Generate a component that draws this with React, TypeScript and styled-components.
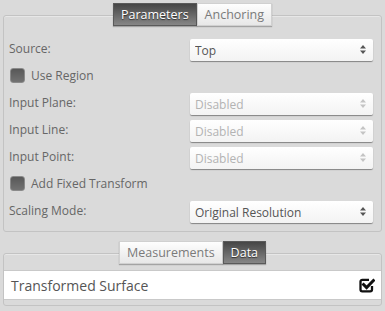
import React from "react";
import styled, { createGlobalStyle } from "styled-components";

const GlobalStyle = createGlobalStyle`
  html, body {
    margin: 0;
    padding: 0;
    background: #dadada;
    font-family: "Open Sans", "DejaVu Sans", sans-serif;
  }
`;

const Page = styled.div`
  width: 385px;
  padding: 0 3px 0 3px;
  box-sizing: border-box;
`;

const Panel = styled.div<{ $top: number }>`
  margin-top: ${(p) => p.$top}px;
  border: 1px solid #c3c3c3;
  border-radius: 3px;
  box-shadow: inset 0 1px 0 rgba(255, 255, 255, 0.35);
`;

const TabBar = styled.div`
  display: flex;
  justify-content: center;
  margin-top: -13px;
  height: 23px;
`;

const Tab = styled.div<{ $active?: boolean }>`
  height: 23px;
  box-sizing: border-box;
  padding: 0 7px;
  display: flex;
  align-items: center;
  font-size: 12.5px;
  color: ${(p) => (p.$active ? "#ffffff" : "#7a7a7a")};
  text-shadow: ${(p) => (p.$active ? "0 1px 1px rgba(0,0,0,0.6)" : "none")};
  background: ${(p) =>
    p.$active
      ? "linear-gradient(#464646, #868686)"
      : "linear-gradient(#fefefe, #e7e7e7)"};
  border: 1px solid ${(p) => (p.$active ? "#5a5a5a" : "#d0d0d0")};
  box-shadow: 0 1px 1px rgba(0, 0, 0, 0.25);
`;

const Rows = styled.div`
  padding: 9px 8px 7px 5px;
`;

const Row = styled.div`
  display: grid;
  grid-template-columns: 1fr 183px;
  align-items: center;
  height: 27px;
`;

const Label = styled.span`
  font-size: 12px;
  color: #666;
`;

const CheckRow = styled.label`
  display: flex;
  align-items: center;
  gap: 6px;
  height: 27px;
  padding-left: 1px;
  font-size: 12px;
  color: #666;
`;

const Box = styled.span`
  width: 15px;
  height: 15px;
  box-sizing: border-box;
  border-radius: 3px;
  background: linear-gradient(#585858, #727272);
  border: 1px solid #8a8a8a;
`;

const SelectWrap = styled.div`
  position: relative;
  height: 22px;
`;

const Select = styled.select`
  appearance: none;
  width: 100%;
  height: 22px;
  border: none;
  border-radius: 2px;
  padding: 0 0 0 5px;
  font-family: "Open Sans", "DejaVu Sans", sans-serif;
  font-size: 12px;
  color: #555;
  background: linear-gradient(#ffffff, #f3f3f3);
  box-shadow: 0 1px 1px rgba(0, 0, 0, 0.4);
  outline: none;

  &:disabled {
    color: #b3b3b3;
    opacity: 1;
  }
`;

const Arrows = styled.svg`
  position: absolute;
  right: 7px;
  top: 7px;
  pointer-events: none;
`;

const DataBody = styled.div`
  padding: 6px 0 5px 0;
`;

const DataRow = styled.div`
  display: flex;
  align-items: center;
  justify-content: space-between;
  height: 30px;
  box-sizing: border-box;
  padding: 0 6px 0 7px;
  background: #fff;
  border-top: 1px solid #c9c9c9;
  border-bottom: 1px solid #c9c9c9;
  font-size: 14px;
  color: #555;
`;

const SelectField = ({
  value,
  disabled,
}: {
  value: string;
  disabled?: boolean;
}) => (
  <SelectWrap>
    <Select disabled={disabled} defaultValue={value}>
      <option>{value}</option>
    </Select>
    <Arrows width="6" height="9" viewBox="0 0 6 9">
      <path
        d="M3 0 L6 3.5 L0 3.5 Z M0 5.5 L6 5.5 L3 9 Z"
        fill={disabled ? "#c4c4c4" : "#555"}
      />
    </Arrows>
  </SelectWrap>
);

const CheckIcon = () => (
  <svg width="16" height="16" viewBox="0 0 16 16">
    <path
      d="M13 9 V12.5 a1.8 1.8 0 0 1 -1.8 1.8 H3.3 a1.8 1.8 0 0 1 -1.8 -1.8 V4.6 a1.8 1.8 0 0 1 1.8 -1.8 H10"
      fill="none"
      stroke="#111"
      strokeWidth="2.3"
    />
    <path
      d="M4.6 7.6 L7.6 10.6 L14.4 3.6"
      fill="none"
      stroke="#111"
      strokeWidth="3"
      strokeLinecap="square"
    />
  </svg>
);

export default function App() {
  return (
    <>
      <GlobalStyle />
      <Page>
        <Panel $top={15}>
          <TabBar>
            <Tab $active>Parameters</Tab>
            <Tab>Anchoring</Tab>
          </TabBar>
          <Rows>
            <Row>
              <Label>Source:</Label>
              <SelectField value="Top" />
            </Row>
            <CheckRow>
              <Box />
              Use Region
            </CheckRow>
            <Row>
              <Label>Input Plane:</Label>
              <SelectField value="Disabled" disabled />
            </Row>
            <Row>
              <Label>Input Line:</Label>
              <SelectField value="Disabled" disabled />
            </Row>
            <Row>
              <Label>Input Point:</Label>
              <SelectField value="Disabled" disabled />
            </Row>
            <CheckRow>
              <Box />
              Add Fixed Transform
            </CheckRow>
            <Row>
              <Label>Scaling Mode:</Label>
              <SelectField value="Original Resolution" />
            </Row>
          </Rows>
        </Panel>
        <Panel $top={21}>
          <TabBar>
            <Tab>Measurements</Tab>
            <Tab $active>Data</Tab>
          </TabBar>
          <DataBody>
            <DataRow>
              Transformed Surface
              <CheckIcon />
            </DataRow>
          </DataBody>
        </Panel>
      </Page>
    </>
  );
}
